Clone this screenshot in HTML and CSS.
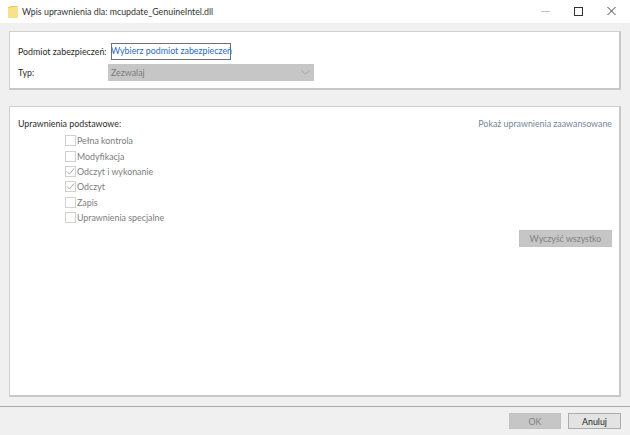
FILE: index.html
```html
<!DOCTYPE html>
<html lang="pl">
  <head>
    <meta charset="UTF-8" />
    <title>Wpis uprawnienia</title>
    <link rel="stylesheet" href="styles.css">
  </head>
  <body>
    <div class="window">
      <!-- Title bar -->
      <div class="title-bar">
        <svg class="folder-icon" width="10" height="12" viewBox="0 0 10 12">
          <path d="M0 1.5 L3.5 0 L9 0 L10 1 L10 12 L0 12 Z" fill="#f9e08a" />
          <path d="M0 1.5 L3.5 0 L9 0 L10 1 L4 1 L0 2.5 Z" fill="#e8c96a" />
        </svg>
        <span class="title-text">Wpis uprawnienia dla: mcupdate_GenuineIntel.dll</span>
        <div class="window-controls">
          <svg width="46" height="23" viewBox="0 0 46 23"><path d="M23 11.5 H32" stroke="#c4c4c4" stroke-width="1" /></svg>
          <svg width="34" height="23" viewBox="0 0 34 23"><rect x="10.5" y="7.5" width="8" height="8" fill="none" stroke="#333" stroke-width="1" /></svg>
          <svg width="32" height="23" viewBox="0 0 32 23"><path d="M9.5 7 L17.5 15 M17.5 7 L9.5 15" stroke="#444" stroke-width="1" /></svg>
        </div>
      </div>

      <div class="content">
        <!-- Principal section -->
        <div class="panel panel-top">
          <div class="form-row">
            <span class="form-label">Podmiot zabezpieczeń:</span>
            <a class="principal-link" href="#">Wybierz podmiot zabezpieczeń</a>
          </div>
          <div class="form-row type-row">
            <span class="form-label">Typ:</span>
            <div class="combo">
              <span>Zezwalaj</span>
              <svg width="9" height="5" viewBox="0 0 9 5"><path d="M0.5 0.5 L4.5 4 L8.5 0.5" fill="none" stroke="#a4a4a4" stroke-width="1" /></svg>
            </div>
          </div>
        </div>

        <!-- Permissions section -->
        <div class="panel panel-main">
          <div class="perm-header">
            <span class="perm-title">Uprawnienia podstawowe:</span>
            <a class="advanced-link" href="#">Pokaż uprawnienia zaawansowane</a>
          </div>
          <div class="perm-list">
            <div class="perm"><span class="check"></span>Pełna kontrola</div>
            <div class="perm"><span class="check"></span>Modyfikacja</div>
            <div class="perm">
              <span class="check"><svg width="9" height="9" viewBox="0 0 9 9"><path d="M1 4.5 L3.5 7 L8 1.5" fill="none" stroke="#a8a8a8" stroke-width="1" /></svg></span>Odczyt i wykonanie
            </div>
            <div class="perm">
              <span class="check"><svg width="9" height="9" viewBox="0 0 9 9"><path d="M1 4.5 L3.5 7 L8 1.5" fill="none" stroke="#a8a8a8" stroke-width="1" /></svg></span>Odczyt
            </div>
            <div class="perm"><span class="check"></span>Zapis</div>
            <div class="perm"><span class="check"></span>Uprawnienia specjalne</div>
          </div>
          <div class="clear-row">
            <button class="btn btn-disabled btn-clear">Wyczyść wszystko</button>
          </div>
        </div>
      </div>

      <!-- Dialog buttons -->
      <div class="footer">
        <button class="btn btn-disabled btn-ok">OK</button>
        <button class="btn btn-cancel">Anuluj</button>
      </div>
    </div>
  </body>
</html>
```

FILE: styles.css
```css
/* Basic page styling */
body {
  margin: 0;
  font-family: Lato, "Open Sans", sans-serif;
  font-size: 8.85px;
  color: #2b2b2b;
  background-color: #f0f0f0;
}

.window {
  width: 630px;
  height: 435px;
  display: flex;
  flex-direction: column;
  overflow: hidden;
}

/* Title bar */
.title-bar {
  height: 23px;
  background-color: #fff;
  display: flex;
  align-items: center;
  padding-left: 8px;
  flex-shrink: 0;
}

.folder-icon {
  margin-right: 4px;
}

.title-text {
  color: #333;
}

.window-controls {
  margin-left: auto;
  display: flex;
}

/* Panels */
.content {
  flex: 1;
  padding: 8px 9px 9px;
  display: flex;
  flex-direction: column;
  gap: 16px;
}

.panel {
  background-color: #fff;
  border: 1px solid #d0d0d0;
  border-bottom: 2px solid #c8c8c8;
  border-right: 2px solid #c8c8c8;
  box-sizing: border-box;
}

.panel-top {
  height: 59px;
  padding: 11px 7px 0 8px;
}

.panel-main {
  flex: 1;
  padding: 9px 7px 0 8px;
}

.form-row {
  display: flex;
  align-items: center;
  height: 17px;
}

.type-row {
  margin-top: 4px;
}

.form-label {
  width: 90px;
  flex-shrink: 0;
  white-space: nowrap;
}

.principal-link {
  margin-left: 3px;
  width: 120px;
  height: 17px;
  box-sizing: border-box;
  border: 1px solid #707070;
  line-height: 13px;
  text-indent: -1px;
  color: #2a6cbd;
  text-decoration: none;
  white-space: nowrap;
}

.combo {
  width: 206px;
  height: 17px;
  background-color: #c6c6c6;
  color: #7b7b7b;
  display: flex;
  align-items: center;
  justify-content: space-between;
  padding: 0 4px 0 3px;
  box-sizing: border-box;
}

/* Permissions */
.perm-header {
  display: flex;
  justify-content: space-between;
  align-items: center;
  height: 14px;
}

.advanced-link {
  color: #75869b;
  text-decoration: none;
}

.perm-list {
  margin-top: 3px;
  padding-left: 47px;
}

.perm {
  height: 15.4px;
  display: flex;
  align-items: center;
  color: #7d7d7d;
}

.check {
  width: 9px;
  height: 9px;
  border: 1px solid #d0d0d0;
  margin-right: 1px;
  display: flex;
  align-items: center;
  justify-content: center;
  flex-shrink: 0;
  background-color: #fff;
}

.clear-row {
  display: flex;
  justify-content: flex-end;
  margin-top: 5px;
}

/* Buttons */
.btn {
  font-family: inherit;
  font-size: 8.85px;
  padding: 0;
  height: 16px;
  box-sizing: border-box;
}

.btn-disabled {
  background-color: #c6c6c6;
  border: 1px solid #c2c2c2;
  color: #828282;
}

.btn-clear {
  width: 93px;
  height: 17px;
}

.btn-ok {
  width: 52px;
}

.btn-cancel {
  width: 53px;
  background-color: #e3e3e3;
  border: 1px solid #acacac;
  color: #222;
}

/* Dialog footer */
.footer {
  height: 29px;
  flex-shrink: 0;
  border-top: 1px solid #a9a9a9;
  box-sizing: border-box;
  display: flex;
  justify-content: flex-end;
  gap: 7px;
  padding: 6px 9px 0 0;
}
```
